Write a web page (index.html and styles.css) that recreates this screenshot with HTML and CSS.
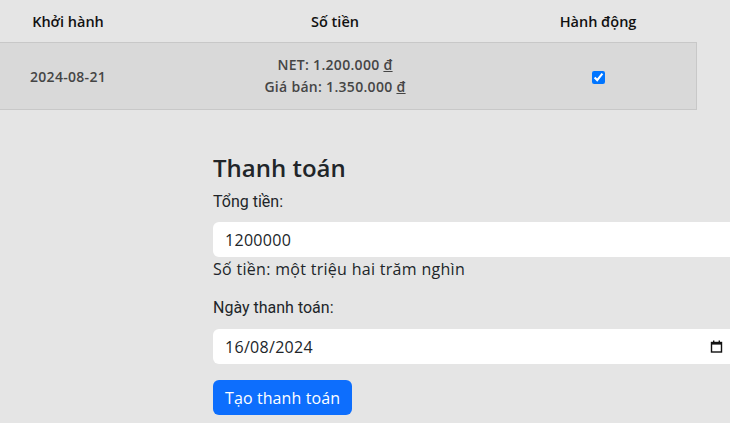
FILE: index.html
```html
<!DOCTYPE html>
<html>
<head>
    <title>Thanh toán</title>
    <link rel="stylesheet" href="styles.css">
</head>
<body>
    <div class="page">
        <div class="tour-table">
            <div class="row head">
                <div class="cell">Khởi hành</div>
                <div class="cell">Số tiền</div>
                <div class="cell">Hành động</div>
                <div class="cell"></div>
            </div>
            <div class="row item">
                <div class="cell">2024-08-21</div>
                <div class="cell money">
                    <span>NET: 1.200.000 <u>đ</u></span>
                    <span>Giá bán: 1.350.000 <u>đ</u></span>
                </div>
                <div class="cell"><input type="checkbox" checked></div>
                <div class="cell"></div>
            </div>
        </div>

        <form class="payment" onsubmit="return false;">
            <h2>Thanh toán</h2>
            <label for="total">Tổng tiền:</label>
            <input type="text" id="total" class="field" value="1200000">
            <p class="hint">Số tiền: một triệu hai trăm nghìn</p>
            <label for="payDate" class="second">Ngày thanh toán:</label>
            <div class="field date-field">
                <input type="text" id="payDate" value="16/08/2024">
                <svg width="13" height="13" viewBox="0 0 13 13">
                    <rect x="1.5" y="2.5" width="10" height="9.5" fill="none" stroke="#111" stroke-width="1.4"/>
                    <rect x="1" y="2" width="11" height="2.6" fill="#111"/>
                    <rect x="3" y="0.5" width="1.4" height="2" fill="#111"/>
                    <rect x="8.6" y="0.5" width="1.4" height="2" fill="#111"/>
                </svg>
            </div>
            <button type="submit">Tạo thanh toán</button>
        </form>
    </div>
</body>
</html>
```

FILE: styles.css
```css
html, body {
    margin: 0;
    background-color: #e5e5e5;
}
body {
    font-family: "Open Sans", sans-serif;
    color: #212529;
    overflow: hidden;
}
.page {
    width: 730px;
    height: 423px;
    overflow: hidden;
}
.tour-table {
    width: 697px;
}
.row {
    display: grid;
    grid-template-columns: 136px 398px 128px 35px;
    align-items: center;
}
.cell {
    text-align: center;
}
.head {
    height: 42px;
    font-weight: 600;
    font-size: 14.5px;
    color: #111;
}
.item {
    height: 66px;
    background-color: #d9d9d9;
    border-top: 1px solid #c8c8c8;
    border-bottom: 1px solid #c8c8c8;
    border-right: 1px solid #c8c8c8;
    font-size: 14px;
    font-weight: 600;
    letter-spacing: 0.3px;
    color: #454545;
}
.money {
    display: flex;
    flex-direction: column;
    line-height: 22px;
}
.item input[type="checkbox"] {
    margin: 0;
    width: 13px;
    height: 13px;
    vertical-align: middle;
}
.payment {
    display: flex;
    flex-direction: column;
    align-items: flex-start;
    margin: 43px 0 0 213px;
    width: 522px;
}
.payment h2 {
    margin: 0 0 8px;
    font-size: 24px;
    font-weight: 600;
    line-height: 29px;
    color: #212529;
}
.payment label {
    font-family: Roboto, sans-serif;
    font-size: 16px;
    line-height: 24px;
    margin-bottom: 8px;
    color: #212529;
}
.payment label.second {
    margin-top: 15px;
    margin-bottom: 9px;
}
.field {
    box-sizing: border-box;
    width: 100%;
    height: 35px;
    border: none;
    border-radius: 6px;
    background-color: #fff;
    padding: 0 12px;
    font-family: "Open Sans", sans-serif;
    font-size: 16px;
    letter-spacing: 0.3px;
    color: #212529;
    outline: none;
}
.date-field {
    display: flex;
    align-items: center;
    gap: 8px;
}
.date-field input {
    flex: 1;
    border: none;
    padding: 0;
    background: transparent;
    font: inherit;
    letter-spacing: inherit;
    color: inherit;
    outline: none;
}
.hint {
    margin: 0;
    font-size: 16px;
    letter-spacing: 0.3px;
    line-height: 24px;
    color: #212529;
}
button {
    margin-top: 16px;
    height: 35px;
    padding: 0 12px;
    border: none;
    border-radius: 6px;
    background-color: #0d6efd;
    color: #fff;
    font-family: "Open Sans", sans-serif;
    font-size: 16px;
    letter-spacing: 0.1px;
    cursor: pointer;
}
```
